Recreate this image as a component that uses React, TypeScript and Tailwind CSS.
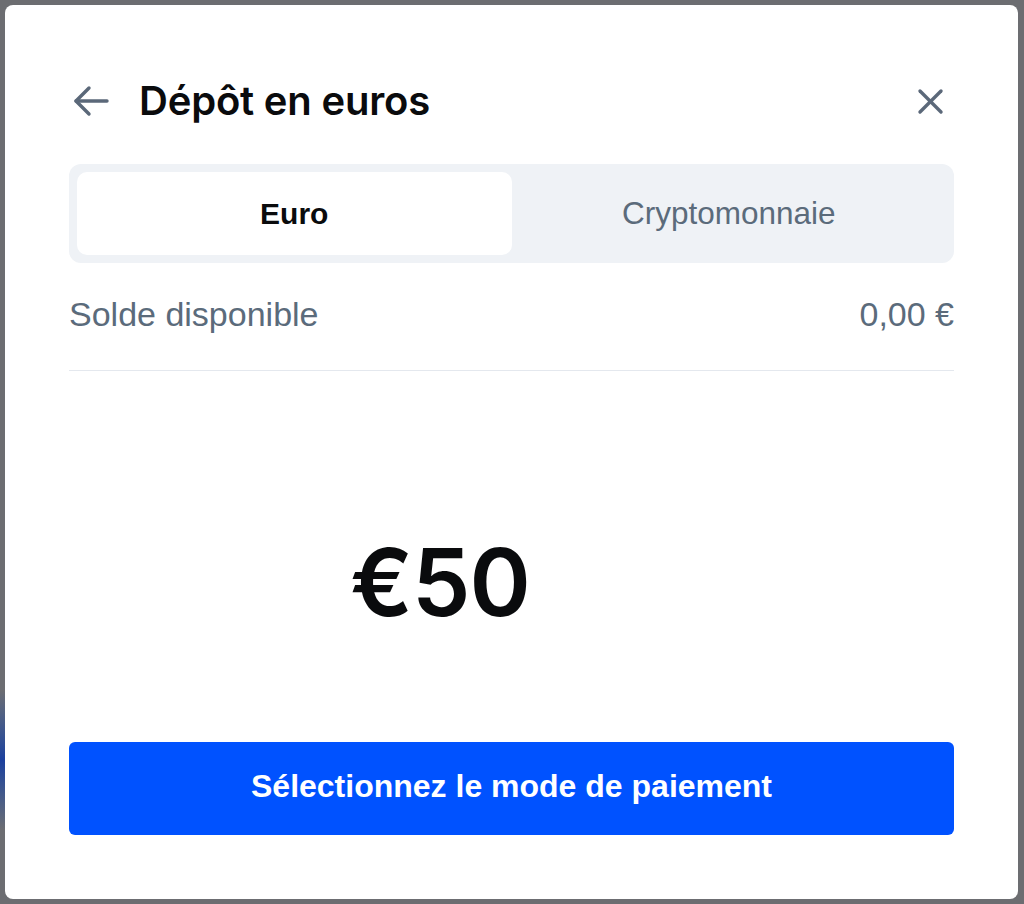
import React from 'react';

const BackArrow = () => (
  <svg width="38" height="32" viewBox="0 0 38 32" fill="none" stroke="#5b6879" strokeWidth="3.4" strokeLinecap="round" strokeLinejoin="round">
    <path d="M4 16h31" />
    <path d="M17 3 4 16l13 13" />
  </svg>
);

const CloseIcon = () => (
  <svg width="28" height="28" viewBox="0 0 28 28" fill="none" stroke="#5b6879" strokeWidth="3.4" strokeLinecap="round">
    <path d="M4 4l21 21" />
    <path d="M25 4 4 25" />
  </svg>
);

const App = () => {
  return (
    <div className="relative w-[1024px] h-[904px] bg-[#6c6d71] p-[5px] overflow-hidden">
      {/* page behind the overlay */}
      <div className="absolute left-0 top-[690px] w-[6px] h-[140px] bg-gradient-to-b from-[#6c6d71] via-[#1b3f9e] to-[#6c6d71]" />
      <div className="relative flex flex-col w-[1013px] h-[894px] bg-white rounded-[8px] px-[64px] pt-[71px] font-['Liberation_Sans',Arial,sans-serif]">
        <div className="flex items-center h-[50px]">
          <button className="flex items-center justify-center w-[40px] ml-[2px]">
            <BackArrow />
          </button>
          <h1 className="ml-[28px] text-[40px] leading-none font-semibold text-[#0a0b0d] font-['Inter',sans-serif] tracking-[-0.2px]">
            Dépôt en euros
          </h1>
          <button className="ml-auto mr-[10px] flex items-center justify-center">
            <CloseIcon />
          </button>
        </div>

        <div className="mt-[38px] flex h-[99px] rounded-[12px] bg-[#eff2f6] p-[8px]">
          <div className="flex flex-1 items-center justify-center rounded-[10px] bg-white text-[30px] font-bold text-[#0a0b0d]">
            Euro
          </div>
          <div className="flex flex-1 items-center justify-center text-[31.5px] text-[#5b6b7b]">
            Cryptomonnaie
          </div>
        </div>

        <div className="flex items-center justify-between h-[108px] pb-[4px] border-b border-[#e4e8ee] text-[34px] text-[#5b6b7b]">
          <span>Solde disponible</span>
          <span>0,00 €</span>
        </div>

        <div className="flex flex-1 items-center pl-[281px] pt-[52px]">
          <span className="text-[93px] leading-none font-semibold text-[#0a0b0d] font-['Inter',sans-serif] tracking-[-1px]">
            €50
          </span>
        </div>

        <button className="mb-[64px] h-[93px] w-full rounded-[6px] bg-[#0052ff] pb-[5px] text-[32px] font-bold text-white">
          Sélectionnez le mode de paiement
        </button>
      </div>
    </div>
  );
};

export default App;
